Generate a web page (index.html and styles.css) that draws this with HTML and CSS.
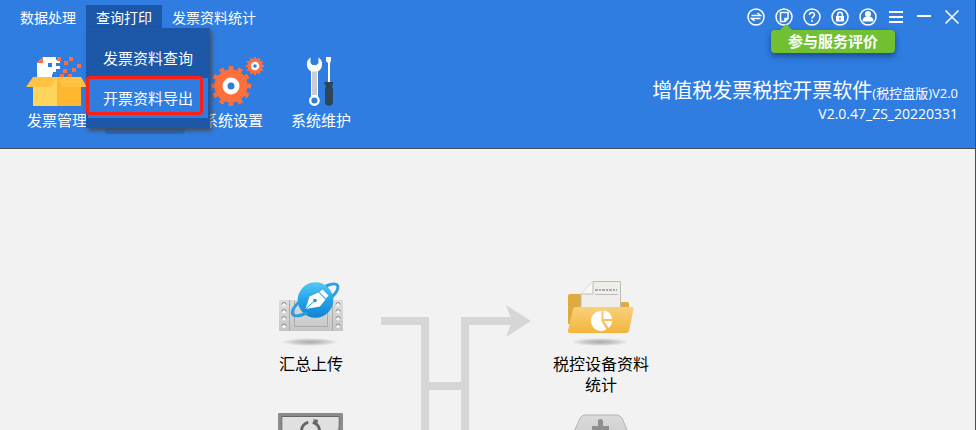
FILE: index.html
```html
<!DOCTYPE html>
<html lang="zh-CN">
<head>
  <meta charset="UTF-8" />
  <meta name="viewport" content="width=device-width, initial-scale=1.0"/>
  <title>增值税发票税控开票软件</title>
  <link rel="stylesheet" href="styles.css">
</head>
<body>
  <header class="header">
    <div class="top-bar">
      <nav class="menu">
        <a href="#" class="menu-link">数据处理</a>
        <div class="menu-item">
          <a href="#" class="menu-link active">查询打印</a>
          <div class="dropdown">
            <a href="#">发票资料查询</a>
            <a href="#" class="selected">开票资料导出</a>
          </div>
        </div>
        <a href="#" class="menu-link">发票资料统计</a>
      </nav>

      <div class="window-tools">
        <button type="button" aria-label="切换">
          <svg viewBox="0 0 18 18"><circle cx="9" cy="9" r="8"/><path d="M4.5 7.5h9L10.5 5M13.5 10.5h-9L7.5 13"/></svg>
        </button>
        <button type="button" aria-label="评价" class="rate-btn">
          <svg viewBox="0 0 18 18"><circle cx="9" cy="9" r="8"/><path d="M5.500 4.500h7.500v6l-3 3H5.500zM10 13.500v-3h3"/></svg>
          <span class="tooltip">参与服务评价</span>
        </button>
        <button type="button" aria-label="帮助">
          <svg viewBox="0 0 18 18"><circle cx="9" cy="9" r="8"/><path d="M6.500 7c0-3.400 5-3.300 5-.3 0 2-2.500 2-2.500 4M9 12v2"/></svg>
        </button>
        <button type="button" aria-label="锁定">
          <svg viewBox="0 0 18 18"><circle cx="9" cy="9" r="8"/><path d="M6.700 8V6.500c0-3 4.600-3 4.600 0V8"/><path class="solid" fill-rule="evenodd" d="M5 8h8v5.500H5zM8.400 9.500v2.500h1.200V9.500z"/></svg>
        </button>
        <button type="button" aria-label="用户">
          <svg viewBox="0 0 18 18"><circle cx="9" cy="9" r="8"/><circle class="solid" cx="9" cy="6" r="3"/><path class="solid" d="M3.500 13.500c0-3 1.500-5 5.500-5s5.500 2 5.500 5z"/></svg>
        </button>
        <button type="button" aria-label="菜单">
          <svg viewBox="0 0 18 18"><path class="thick" d="M2 4h14M2 9h14M2 14h14"/></svg>
        </button>
        <button type="button" aria-label="最小化">
          <svg viewBox="0 0 18 18"><path class="thick" d="M2 8h14"/></svg>
        </button>
        <button type="button" aria-label="关闭">
          <svg viewBox="0 0 18 18"><path d="M2.500 2.500l13 13M15.500 2.500l-13 13"/></svg>
        </button>
      </div>
    </div>

    <div class="banner">
      <ul class="toolbar">
        <li>
          <a href="#">
            <svg viewBox="0 0 62 54">
              <path d="M11 9l6-6h13v3h4v3h-4v3h4v3h-4v3h-3v5H11z" fill="#fff"/>
              <path d="M11 9l6-6v6z" fill="#ff6f3c"/>
              <path d="M22 9h4v4h-4zM26 20h4v3h-4z" fill="#2f7de1"/>
              <path d="M31 3h4v4h-4zM43 3h4v4h-4zM38 7h4v4h-4zM51 10h4v4h-4zM37 15h4v4h-4zM46 14h4v4h-4zM34 20h4v3h-4zM42 20h4v3h-4z" fill="#ff6f3c"/>
              <path d="M7 23h25v29H7z" fill="#ffd45c"/>
              <path d="M31 23h24v29H31z" fill="#ffb732"/>
              <path d="M7 23h24l-6 10H0z" fill="#ffc343"/>
              <path d="M31 23h24l6 10H37z" fill="#ffc343"/>
            </svg>
            发票管理
          </a>
        </li>
        <li class="current"></li>
        <li>
          <a href="#">
            <svg viewBox="0 0 62 54">
              <circle cx="29" cy="32" r="12" fill="none" stroke="#ff6f3c" stroke-width="9"/>
              <circle cx="29" cy="32" r="18" fill="none" stroke="#ff6f3c" stroke-width="4" pathLength="24" stroke-dasharray="1 1" stroke-dashoffset=".5"/>
              <circle cx="29" cy="32" r="6" fill="none" stroke="#fff" stroke-width="5"/>
              <circle cx="53" cy="12" r="5" fill="none" stroke="#ff6f3c" stroke-width="5"/>
              <circle cx="53" cy="12" r="8" fill="none" stroke="#ff6f3c" stroke-width="2" pathLength="24" stroke-dasharray="1 1" stroke-dashoffset=".5"/>
              <circle cx="53" cy="12" r="3" fill="none" stroke="#fff" stroke-width="2.500"/>
            </svg>
            系统设置
          </a>
        </li>
        <li>
          <a href="#">
            <svg viewBox="0 0 62 54">
              <path d="M21 15h7v28h-7z" fill="#fff"/>
              <path d="M22 17h5v24h-5z" fill="#ccc"/>
              <path d="M20.500 3.500c-5.500 3-4.500 12 1 14h6c5.500-2 6.500-11 1-14V9l-2 2h-4l-2-2z" fill="#fff"/>
              <circle cx="24.400" cy="46.500" r="4.200" fill="#2f7de1" stroke="#fff" stroke-width="2.400"/>
              <path d="M36 3h5v4l-1 2v20h-2V9l-2-2z" fill="#fff"/>
              <path d="M34.500 28h8.500v2l-1 2 1 3v13c0 5-8 5-8 0V35l1-3-1.500-2z" fill="#2d4459"/>
            </svg>
            系统维护
          </a>
        </li>
      </ul>

      <div class="product">
        <h1>增值税发票税控开票软件<small>(税控盘版)V2.0</small></h1>
        <p>V2.0.47_ZS_20220331</p>
      </div>
    </div>
  </header>

  <main class="flow">
    <a href="#" class="flow-item">
      <svg viewBox="0 0 70 68">
        <defs>
          <linearGradient id="film" x2="0" y2="1"><stop stop-color="#dedede"/><stop offset="1" stop-color="#c6c6c6"/></linearGradient>
          <linearGradient id="globe" x2="0" y2="1"><stop stop-color="#55c9f5"/><stop offset=".5" stop-color="#25a3e8"/><stop offset="1" stop-color="#1283d4"/></linearGradient>
          <radialGradient id="shadow"><stop stop-color="#aaa"/><stop offset=".5" stop-color="#c8c8c8"/><stop offset="1" stop-color="#f2f2f2"/></radialGradient>
        </defs>
        <ellipse cx="34" cy="62" rx="29" ry="4" fill="url(#shadow)"/>
        <path d="M3 20h64v31H3z" fill="url(#film)"/>
        <path d="M13.500 20v31M56.500 20v31" stroke="#aaa"/>
        <path d="M18.500 21v25.500h33V21" fill="none" stroke="#aaa"/>
        <g fill="#f5f5f5">
          <circle cx="8" cy="24.500" r="2"/><circle cx="8" cy="31.500" r="2"/><circle cx="8" cy="38.500" r="2"/><circle cx="8" cy="46" r="2"/>
          <circle cx="62" cy="24.500" r="2"/><circle cx="62" cy="31.500" r="2"/><circle cx="62" cy="38.500" r="2"/><circle cx="62" cy="46" r="2"/>
        </g>
        <path d="M6 24.500a2 2 0 0 1 4 0M6 31.500a2 2 0 0 1 4 0M6 38.500a2 2 0 0 1 4 0M6 46a2 2 0 0 1 4 0M60 24.500a2 2 0 0 1 4 0M60 31.500a2 2 0 0 1 4 0M60 38.500a2 2 0 0 1 4 0M60 46a2 2 0 0 1 4 0" fill="none" stroke="#888"/>
        <circle cx="39.500" cy="20" r="17.800" fill="url(#globe)"/>
        <path d="M23 22c-5 5-8 10-6 12.500s8 1 14-1.500M50 6c6-2.500 10-3 11.500-.5S60 13 56 17" fill="none" stroke="#2b9fe4" stroke-width="3"/>
        <path d="M29.500 29l4-12.500 9-4 7 7-5.500 7z" fill="#fff"/>
        <path d="M43.500 12l3-2.500 6 6-2.500 3z" fill="#fff"/>
        <path d="M30 28.500l8-7" stroke="#1f93dd"/>
        <circle cx="39" cy="20.500" r="1.800" fill="#1f93dd"/>
      </svg>
      <span>汇总上传</span>
    </a>

    <svg class="connector" viewBox="0 -2 150 128">
      <path d="M0 15h44v111M84 126V15h50M44 80h40" fill="none" stroke="#d6d6d6" stroke-width="8"/>
      <path d="M125-1l25 16-25 16 6-16z" fill="#d6d6d6"/>
    </svg>

    <a href="#" class="flow-item">
      <svg viewBox="0 0 70 68">
        <defs>
          <linearGradient id="folder" x2="0" y2="1"><stop stop-color="#f9d17b"/><stop offset="1" stop-color="#f3b53c"/></linearGradient>
        </defs>
        <ellipse cx="34" cy="62" rx="29" ry="4" fill="url(#shadow)"/>
        <path d="M2 16q0-2 2-2h12v8h45q2 0 2 2v20H2z" fill="#e0aa40"/>
        <path d="M15 14L27 1.500h27.500V30H15z" fill="#efeeea" stroke="#bdbdb8"/>
        <path d="M15 14h12V1.500" fill="#f7f7f5" stroke="#bdbdb8"/>
        <path d="M29 10h22" stroke="#aaa" stroke-width="2" stroke-dasharray="3 1 2 1"/>
        <path d="M29 14.500h23" stroke="#bbb"/>
        <path d="M10 27h56q2 0 1.500 2l-4.500 22q-.5 2-3 2H4q-2.500 0-2-2.500L7 29q.5-2 3-2z" fill="url(#folder)"/>
        <path d="M35.500 31a10 10 0 1 0 5 18.300L35.500 41z" fill="#fff"/>
        <path d="M37.500 30.500a9 9 0 0 1 8.500 8.500h-8.500z" fill="#fff"/>
        <path d="M38 41h8q0 4-3.500 7z" fill="#fff"/>
      </svg>
      <span>税控设备资料统计</span>
    </a>

    <a href="#" class="flow-item" aria-label="监控">
      <svg viewBox="0 0 70 68">
        <rect x="2" y="1" width="65" height="48" rx="1" fill="#8c8c8c"/>
        <path d="M6 4.500h57V45H6z" fill="#d4d4d4" stroke="#666"/>
        <path d="M62.500 5v10L32 44.500H6.500V5z" fill="#e0e0e0"/>
        <circle cx="34.500" cy="19" r="9" fill="none" stroke="#666" stroke-width="3" pathLength="24" stroke-dasharray="6 2" stroke-dashoffset="-3"/>
        <path d="M37 7l5 1-1 5z" fill="#666"/>
      </svg>
    </a>

    <a href="#" class="flow-item flow-last" aria-label="设备">
      <svg viewBox="0 0 70 68">
        <defs>
          <linearGradient id="device" x2="0" y2="1"><stop stop-color="#dadada"/><stop offset="1" stop-color="#c2c2c2"/></linearGradient>
        </defs>
        <path d="M19 3h32q3 0 5 3l12 28v14H2V34L14 6q2-3 5-3z" fill="url(#device)" stroke="#b5b5b5"/>
        <path d="M32 14V9q0-2 2.500-2T37 9v5h6v6h-6v6h-5v-6h-6v-6z" fill="#8f8f8f"/>
      </svg>
    </a>
  </main>
</body>
</html>
```
FILE: styles.css
```css
* {
  box-sizing: border-box;
}

body {
  margin: 0;
  height: 100vh;
  display: flex;
  flex-direction: column;
  overflow: hidden;
  font-family: "Open Sans", "Noto Sans CJK SC", sans-serif;
  font-size: 15px;
  background: #f2f2f2;
  border-right: 1px solid #4a4f57;
}

a {
  color: inherit;
  text-decoration: none;
}

.header {
  height: 149px;
  flex-shrink: 0;
  background: #2f7de1;
  color: #fff;
  border-bottom: 1px solid #4a4f57;
}

.top-bar,
.banner {
  display: flex;
  justify-content: space-between;
}

.top-bar {
  height: 54px;
  padding: 5px 14px 0 10px;
}

/* menu */
.menu {
  display: flex;
  align-items: flex-start;
  font-size: 14px;
}

.menu-link {
  display: block;
  padding: 0 10px;
  line-height: 25px;
}

.menu-link.active {
  background: #1c57a8;
}

.menu-item {
  position: relative;
}

.dropdown {
  position: absolute;
  top: 23px;
  left: 0;
  z-index: 2;
  width: 124px;
  padding: 10px 2px;
  background: #1c57a8;
  box-shadow: 2px 3px 4px rgba(70, 70, 70, 0.8);
  font-size: 15px;
}

.dropdown a {
  display: block;
  position: relative;
  padding-left: 15px;
  line-height: 40px;
}

.dropdown .selected {
  background: #2f7de1;
}

.dropdown .selected::after {
  content: "";
  position: absolute;
  inset: -2px 5px 3px -2px;
  border: 3px solid #ff2015;
  border-radius: 4px;
}

/* window buttons */
.window-tools {
  display: flex;
  align-items: flex-start;
  gap: 10px;
  padding-top: 3px;
}

.window-tools button {
  position: relative;
  width: 18px;
  height: 18px;
  padding: 0;
  border: none;
  background: none;
  color: #fff;
  font-family: inherit;
  cursor: pointer;
}

.window-tools svg {
  display: block;
  width: 18px;
  height: 18px;
  fill: none;
  stroke: #fff;
  stroke-width: 1.5;
}

.window-tools .solid {
  fill: #fff;
  stroke: none;
}

.window-tools .thick {
  stroke-width: 2;
}

.tooltip {
  position: absolute;
  top: 22px;
  left: -4px;
  width: 124px;
  border-radius: 4px;
  background: #70c032;
  box-shadow: 0 3px 6px rgba(20, 50, 100, 0.7);
  font-size: 15px;
  font-weight: bold;
  line-height: 23px;
}

.tooltip::before {
  content: "";
  position: absolute;
  bottom: 100%;
  left: 9px;
  border: 6px solid transparent;
  border-top: 0;
  border-bottom-color: #70c032;
}

/* toolbar */
.toolbar {
  display: grid;
  grid-template-columns: repeat(4, 88px);
  margin: 0;
  padding: 0 0 0 13px;
  list-style: none;
  text-align: center;
  line-height: 24px;
}

.toolbar svg {
  display: block;
  width: 62px;
  height: 54px;
  margin: 0 auto;
}

.toolbar .current {
  width: 80px;
  height: 80px;
  margin: 0 auto;
  border-radius: 4px;
  background: #2768be;
}

.product {
  padding: 24px 17px 0 0;
  text-align: right;
}

.product h1 {
  margin: 0;
  font-size: 20px;
  font-weight: normal;
  line-height: 26px;
}

.product small {
  font-size: 13px;
}

.product p {
  margin: 0;
  font-size: 14px;
  line-height: 16px;
}

/* flow chart */
.flow {
  flex: 1;
  min-height: 0;
  overflow: hidden;
  display: grid;
  grid-template-columns: 100px 150px 100px;
  grid-template-rows: 132px 132px;
  column-gap: 20px;
  justify-content: center;
  padding: 131px 63px 0 0;
  color: #000;
  font-size: 16px;
  line-height: 21px;
  text-align: center;
}

.flow-item svg {
  display: block;
  width: 70px;
  height: 68px;
  margin: 0 auto 6px;
}

.flow-last {
  grid-column: 3;
}

.connector {
  grid-row: 1 / 3;
  grid-column: 2;
  width: 150px;
  height: 128px;
  margin-top: 24px;
}
```
